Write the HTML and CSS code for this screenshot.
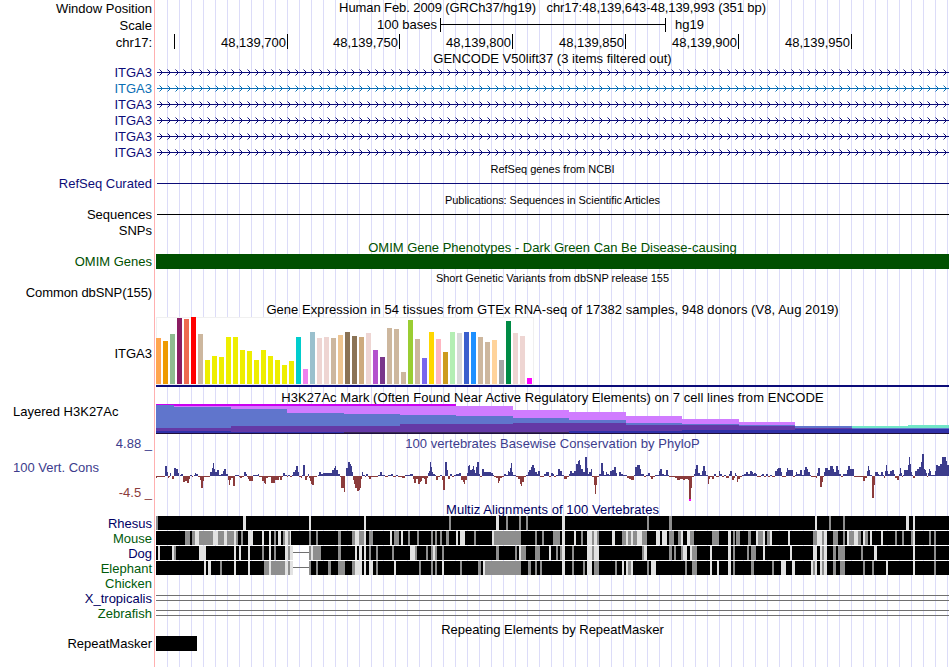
FILE: index.html
```html
<!DOCTYPE html>
<html lang="en">
<head>
<meta charset="utf-8">
<title>Genome Browser - chr17:48,139,643-48,139,993</title>
<link rel="stylesheet" href="styles.css">
</head>
<body>
<main class="browser">
  <div class="row h16 position"><div class="label">Window Position</div><div class="title">Human Feb. 2009 (GRCh37/hg19) &nbsp; chr17:48,139,643-48,139,993 (351 bp)</div></div>
  <div class="row h17"><div class="label">Scale</div><div class="scale"><span class="scale-text">100 bases</span><span class="scale-bar"></span><span>hg19</span></div></div>
  <div class="row h17"><div class="label">chr17:</div><div class="ruler"><span class="tick first"></span><span class="tick">48,139,700</span><span class="tick narrow">48,139,750</span><span class="tick">48,139,800</span><span class="tick">48,139,850</span><span class="tick">48,139,900</span><span class="tick">48,139,950</span></div></div>

  <div class="row h14 gencode"><div class="title">GENCODE V50lift37 (3 items filtered out)</div></div>
  <div class="row h16 navy"><div class="label">ITGA3</div><svg class="gene" width="793" height="16"></svg></div>
  <div class="row h16 azure"><div class="label">ITGA3</div><svg class="gene" width="793" height="16"></svg></div>
  <div class="row h16 navy"><div class="label">ITGA3</div><svg class="gene" width="793" height="16"></svg></div>
  <div class="row h16 navy"><div class="label">ITGA3</div><svg class="gene" width="793" height="16"></svg></div>
  <div class="row h16 navy"><div class="label">ITGA3</div><svg class="gene" width="793" height="16"></svg></div>
  <div class="row h16 navy"><div class="label">ITGA3</div><svg class="gene" width="793" height="16"></svg></div>

  <div class="row h15"><div class="title small">RefSeq genes from NCBI</div></div>
  <div class="row h16 navy"><div class="label">RefSeq Curated</div><div class="line"></div></div>
  <div class="row h15"><div class="title small tight">Publications: Sequences in Scientific Articles</div></div>
  <div class="row h16"><div class="label">Sequences</div><div class="line"></div></div>
  <div class="row h16"><div class="label">SNPs</div></div>
  <div class="row h16 green"><div class="title">OMIM Gene Phenotypes - Dark Green Can Be Disease-causing</div></div>
  <div class="row h15 green"><div class="label">OMIM Genes</div><div class="block"></div></div>
  <div class="row h16"><div class="title small">Short Genetic Variants from dbSNP release 155</div></div>
  <div class="row h15"><div class="label snp">Common dbSNP(155)</div></div>

  <div class="row h17 wide"><div class="title">Gene Expression in 54 tissues from GTEx RNA-seq of 17382 samples, 948 donors (V8, Aug 2019)</div></div>
  <div class="row h71"><div class="label">ITGA3</div><svg id="gtex" width="793" height="71"></svg></div>

  <div class="row h16 wide"><div class="title">H3K27Ac Mark (Often Found Near Active Regulatory Elements) on 7 cell lines from ENCODE</div></div>
  <div class="row h30"><div class="label left">Layered H3K27Ac</div><svg id="h3k" width="793" height="30"></svg></div>

  <div class="row h18 slate wide"><div class="label">4.88 _</div><div class="title">100 vertebrates Basewise Conservation by PhyloP</div></div>
  <div class="row h50 slate"><div class="label stack"><span class="left">100 Vert. Cons</span><span class="low">-4.5 _</span></div><svg id="phylop" width="793" height="50"></svg></div>

  <div class="row h14 species multiz wide"><div class="title">Multiz Alignments of 100 Vertebrates</div></div>
  <div class="row h15 species"><div class="label">Rhesus</div><svg class="align" data-species="rhesus" width="793" height="15"></svg></div>
  <div class="row h15 forest"><div class="label">Mouse</div><svg class="align" data-species="mouse" width="793" height="15"></svg></div>
  <div class="row h15 species"><div class="label">Dog</div><svg class="align" data-species="dog" width="793" height="15"></svg></div>
  <div class="row h15 forest"><div class="label">Elephant</div><svg class="align" data-species="elephant" width="793" height="15"></svg></div>
  <div class="row h15 forest"><div class="label">Chicken</div></div>
  <div class="row h15 species"><div class="label">X_tropicalis</div><div class="double"></div></div>
  <div class="row h15 forest"><div class="label">Zebrafish</div><div class="double"></div></div>

  <div class="row h15 repeats"><div class="title">Repeating Elements by RepeatMasker</div></div>
  <div class="row h15"><div class="label">RepeatMasker</div><div class="block repeat"></div></div>
</main>
<script src="script.js"></script>
</body>
</html>
```
FILE: styles.css
```css
body {
  margin: 0;
  background: #fff;
  color: #000;
  font: 13px/15px "Liberation Sans", Arial, sans-serif;
}

.browser {
  width: 949px;
  height: 667px;
  overflow: hidden;
  background:
    linear-gradient(#ffb0b0, #ffb0b0) 154px 0 / 1px 100% no-repeat,
    repeating-linear-gradient(to right, transparent 0 11px, #dcdcf8 11px 12px) 156px 0 / 793px 100% no-repeat;
}

.row {
  display: grid;
  grid-template-columns: 156px 793px;
  grid-template-rows: 100%;
  align-items: start;
  white-space: nowrap;
}
.h14 { height: 14px; }
.h15 { height: 15px; }
.h16 { height: 16px; }
.h17 { height: 17px; }
.h18 { height: 18px; }
.h30 { height: 30px; }
.h50 { height: 50px; }
.h71 { height: 71px; }

.row > svg { display: block; grid-column: 2; }
.label { text-align: right; padding-right: 4px; }
.h16 .label { padding-top: 1px; }
.h17 .label, .h18 .label { padding-top: 2px; }
.h71 .label { padding-top: 29px; }
.left { text-align: left; padding-left: 13px; }
.snp { letter-spacing: -0.1px; }

.title { grid-column: 2; text-align: center; padding-top: 2px; }
.small { font-size: 11px; line-height: 12px; padding-top: 3px; }
.tight { letter-spacing: -0.06px; }
.wide .title { letter-spacing: 0.055px; }
.position .title { padding-top: 0; letter-spacing: -0.09px; }
.multiz .title { padding-top: 0; }
.gencode .title, .repeats .title { padding-top: 1px; }

.navy { color: #0c0c78; }
.azure { color: #0a6eb4; }
.green { color: #005000; }
.slate { color: #3c3c8c; }
.species { color: #000064; }
.forest { color: #005a0a; }

.scale { display: flex; align-items: flex-start; padding-top: 1px; }
.scale-text { width: 281px; text-align: right; margin-right: 3px; }
.scale-bar {
  width: 224px;
  height: 14px;
  margin: 1px 9px 0 0;
  border: solid #000;
  border-width: 0 1px;
  background: linear-gradient(#000, #000) 0 6px / 100% 1px no-repeat;
}

.ruler { display: flex; margin-top: 1px; }
.tick {
  box-sizing: border-box;
  width: 113px;
  height: 15px;
  padding: 1px 1px 0 0;
  text-align: right;
  border-right: 1px solid #000;
}
.tick.first { width: 19px; }
.tick.narrow { width: 112px; }

.line { height: 1px; margin: 8px 0 0 1px; background: currentColor; }
.block { height: 15px; background: currentColor; }
.repeat { width: 41px; }
.double { height: 4px; margin-top: 4px; border: solid #707070; border-width: 1px 0; }

.stack { display: flex; flex-direction: column; }
.stack .left { padding-top: 8px; }
.stack .low { padding-top: 10px; color: #8c3c3c; }
```
FILE: script.js
```javascript
const NS = "http://www.w3.org/2000/svg";
const ORIGIN = 156;

function rect(svg, x, y, w, h, fill) {
  const r = document.createElementNS(NS, "rect");
  r.setAttribute("x", x);
  r.setAttribute("y", y);
  r.setAttribute("width", w);
  r.setAttribute("height", h);
  r.setAttribute("fill", fill);
  svg.appendChild(r);
}

// Introns: a thin line with strand chevrons every 8px.
document.querySelectorAll(".gene").forEach(svg => {
  rect(svg, 1, 8, 792, 1, "currentColor");
  let d = "";
  for (let x = 3.5; x < 791; x += 8) d += `M${x} 5.5l3 3l-3 3`;
  const p = document.createElementNS(NS, "path");
  p.setAttribute("d", d);
  p.setAttribute("fill", "none");
  p.setAttribute("stroke", "currentColor");
  p.setAttribute("stroke-width", "1");
  svg.appendChild(p);
});

// GTEx: top of each bar and tissue colour.
const tan = "#cdb79e", yellow = "#eeee00", pink = "#eed5d2";
const tops = [38,41,34,18,19,17,34,60,56,57,37,37,50,51,60,50,56,60,65,61,37,69,32,38,37,38,35,32,36,37,33,50,57,28,29,72,20,39,58,32,39,52,32,33,32,32,37,42,40,60,21,33,36,78];
const tissue = ["#ffa54f","#ee9a00","#8fbc8f","#8b1c62","#ee6a50","#ff0000",tan,
  ...Array(13).fill(yellow),"#00cdcd","#ee82ee","#9ac0cd",pink,pink,tan,"#eec591","#8b7355","#8b7355","#cdaa7d",pink,
  "#b452cd","#7a378b",tan,tan,tan,"#9acd32",tan,"#7a67ee","#ffd700","#ffb6c1","#cd9b1d","#b4eeb4","#d9d9d9",
  "#3a5fcd","#1e90ff",tan,tan,"#ffd39b","#a6a6a6","#008b45",pink,pink,"#ff00ff"];
const gtex = document.getElementById("gtex");
rect(gtex, 0, 0, 378, 68, "#f0f0f0");
rect(gtex, 1, 1, 376, 66, "#ffffff");
tops.forEach((t, i) => rect(gtex, i * 7, t - 17, 5, 84 - t, tissue[i]));
rect(gtex, 0, 68, 793, 2, "#0c0c78");

// H3K27Ac: stacked translucent cell lines, [start, top] steps per layer.
const h3k = document.getElementById("h3k");
const layers = [
  ["#d07cff", [[156,0],[456,2],[513,6],[569,8],[626,12],[682,15],[739,18],[795,30]]],
  ["#cc00f0", [[156,0],[456,30]], 2],
  ["#72e6c8", [[852,22],[908,21]]],
  ["#6075cc", [[156,1],[174,3],[231,5],[287,9],[344,10],[400,11],[456,12],[513,14],[569,16],[626,19],[682,20],[739,21],[795,22],[852,24]]],
  ["#6439a6", [[156,24],[231,22],[400,20],[513,19],[569,19],[626,21],[682,21],[739,22],[795,24],[852,25]]],
  ["#3030a8", [[156,27],[231,28],[344,29],[569,27],[682,26],[795,25]]],
  ["#382858", [[344,28],[569,29]]],
  ["#20103c", [[156,29]]]
];
layers.forEach(([fill, steps, depth]) => steps.forEach(([x, y], i) => {
  const end = i + 1 < steps.length ? steps[i + 1][0] : 949;
  rect(h3k, x - ORIGIN, y, end - x, Math.min(depth || 30, 30 - y), fill);
}));

// PhyloP: "start:score" runs, each holding until the next one.
const scores = `156:-2 157:-1 165:10 167:4 168:-2 169:-1 170:3 171:0 172:-3 174:8 176:7 178:3 179:0 180:1 181:2 183:-6 185:-5 187:-7 189:-3 190:1 192:-1 193:0 194:1 195:3 196:2 198:-1 200:-4 201:-12 203:-5 204:-1 210:4 212:8 213:13 214:7 215:4 217:6 219:1 221:2 223:5 224:7 226:2 228:-4 229:-9 230:-4 231:-2 233:-10 235:1 239:-1 240:-2 242:-1 244:4 246:2 247:-1 248:-3 249:-5 253:1 258:2 259:-1 262:-5 264:-7 265:-8 266:-2 268:-1 271:-7 275:-4 279:-1 280:-4 282:-1 283:3 285:1 287:-1 288:1 290:-1 292:1 293:4 295:6 296:10 298:4 299:-1 301:-2 302:1 303:11 305:-4 307:-1 308:2 309:-2 310:-5 311:-8 312:-9 314:-1 317:0 318:1 319:4 321:2 323:3 332:6 334:8 335:10 336:6 338:2 340:-1 341:-12 344:-16 345:0 346:8 348:14
350:12 351:10 352:4 353:-4 354:-8 355:-12 357:-15 359:-14 360:-12 361:-3 362:4 363:1 365:-1 366:2 368:-1 369:-3 371:-1 378:1 380:4 382:1 385:-1 388:1 391:2 393:-1 396:1 398:-1 402:-2 405:1 410:2 413:-3 414:-7 416:-3 418:-8 420:-6 421:-5 422:-2 424:-3 425:-8 427:-2 428:3 429:5 430:14 431:9 432:4 433:2 435:1 436:-4 438:-1 440:1 442:-4 443:-14 445:14 447:6 448:-3 450:2 452:-1 454:1 456:2 459:3 461:-4 463:-6 464:-8 465:-4 467:3 468:10 469:11 470:6 472:7 473:10 474:6 475:3 476:9 477:14 479:2 480:-1 482:7 484:4 491:3 493:1 494:-1 496:-2 498:-7 499:-5 500:-2 502:-1 504:2 506:1 508:5 509:4 510:8 511:13 512:4 513:1 516:-1 518:-3 520:-8 521:-10 522:-6 524:-1 526:1 528:4 529:6 531:9 532:11 534:8 535:4 537:2 538:5 540:-1 544:2 546:4 549:-1
551:3 553:2 554:-1 556:1 558:7 560:5 562:1 564:-3 567:-1 569:2 570:5 572:3 574:5 576:12 578:15 579:16 580:11 581:7 583:4 585:19 587:8 588:2 589:4 591:7 592:-1 594:-9 595:-18 596:-9 597:-1 599:2 601:13 603:5 604:1 606:4 607:2 609:1 610:5 612:6 614:9 616:3 617:0 619:4 621:2 623:1 627:-2 629:-3 631:-4 634:1 635:9 637:11 640:7 641:2 644:-1 646:1 648:3 650:-1 651:-3 653:-1 655:1 659:5 660:7 662:2 664:1 666:6 668:1 669:-1 675:-2 677:-4 680:-3 683:-4 685:-3 688:-4 689:-25 691:-12 692:-1 694:2 695:7 696:11 698:3 700:1 702:5 703:10 705:5 706:1 708:-8 709:-3 710:-1 712:-3 714:2 716:-1 719:5 720:2 722:-1 724:1 726:-2 729:2 730:5 732:-4 734:-2 735:3 736:1 737:-6 738:-3 740:-1 742:1 744:2 746:4 748:2
750:5 752:4 753:2 754:3 756:2 757:-1 761:1 762:2 764:-1 766:2 768:-1 770:1 772:-1 775:5 777:7 778:8 781:4 782:-1 786:4 787:8 788:6 793:-1 795:1 796:4 797:2 800:6 802:1 804:6 805:9 807:7 808:4 810:1 811:-1 816:-2 817:3 818:8 820:-11 822:-6 823:-1 824:4 825:8 828:6 830:10 833:7 834:4 836:10 838:6 839:2 841:-1 843:2 847:6 848:10 850:7 854:-1 863:-5 865:-2 867:5 868:10 869:6 870:1 872:-22 874:-9 875:4 878:2 879:1 881:4 883:1 884:-2 885:5 886:11 887:5 888:2 890:5 892:6 894:2 895:-2 897:-4 899:2 900:8 901:3 902:-1 903:1 904:6 908:11 909:19 910:12 911:4 912:1 913:-2 915:5 917:7 919:9 921:14 922:22 924:7 925:6 926:3 927:-1 928:3 929:7 930:5 931:1 935:5 936:11 938:10 940:12 942:19 946:15 947:11 949:0`
  .split(/\s+/).map(s => s.split(":").map(Number));
const phylop = document.getElementById("phylop");
scores.slice(0, -1).forEach(([x, v], i) => {
  const w = scores[i + 1][0] - x;
  rect(phylop, x - ORIGIN, v > 0 ? 24 - v : 24, w, Math.abs(v), v > 0 ? "#3c3c8c" : "#8c3c3c");
});
rect(phylop, 689 - ORIGIN, 47, 2, 2, "#ff00ff");

// Alignments: kind, start, width. g = partial, l = weak, n = unaligned gap.
const align = {
  rhesus: "g156,2 l243,3 l309,2 l364,2 g449,2 l496,3 g506,2 g519,2 g526,2 l562,3 g647,2 g669,3 l815,2 g829,2 g843,2 l906,3 l913,2",
  mouse: "g185,5 g192,3 l195,4 g199,14 l213,5 g218,6 l224,3 g227,7 l234,2 g236,2 g241,2 l248,5 l262,2 l269,2 g274,2 l278,3 g283,2 l285,3 g288,2 l290,1 g309,2 g316,2 g338,3 g352,3 l355,4 g359,5 l364,2 g369,4 l390,2 g394,5 l401,2 g408,2 g417,2 g431,2 g435,2 g440,2 g446,3 l456,2 l460,5 g474,2 l492,2 g494,27 g535,2 g542,2 g553,7 l562,3 l574,2 g581,2 l587,5 g592,2 l594,3 g597,2 l612,3 g622,4 l626,2 g628,3 l631,2 g633,4 l637,5 g642,5 l656,4 l662,5 g669,5 g678,3 l681,2 l687,3 g690,4 g712,7 l728,3 g733,2 g736,4 g748,3 l756,2 g758,5 l763,2 g767,3 l770,2 l788,2 g813,4 l817,5 g822,2 l824,3 g833,5 g843,2 l847,2 g849,5 l854,4 g858,3 l863,2 g865,3 l870,2 l881,2 g895,2 g902,2 g911,2 l913,2 g929,2 g934,2",
  dog: "l158,2 l172,2 g174,2 l199,7 l234,2 l239,2 l248,2 g262,2 l269,2 g274,2 l285,3 g288,2 l290,3 n293,16 g309,2 l311,2 g313,8 g338,3 l355,2 l359,3 l364,2 g369,2 g376,2 g392,2 l410,5 g415,2 g426,2 g431,2 l433,2 g435,2 g442,2 g496,3 g515,2 l519,2 g521,5 g535,5 l549,2 g556,2 g560,2 l562,3 g572,2 l587,5 g592,2 l594,5 g642,2 l644,3 g669,3 g674,2 g681,2 l683,4 l690,2 g692,5 l710,2 l728,3 g733,2 g747,2 g751,5 l763,2 l790,2 l813,4 l820,2 g822,2 l824,3 g833,3 g838,7 g861,2 l874,3 l913,2 g934,2",
  elephant: "l204,2 l208,3 g220,2 l234,2 l248,2 g264,5 l269,2 g271,14 l285,3 g288,2 l290,3 n293,16 g309,2 g316,2 g328,3 g338,7 g352,3 l355,7 l364,2 l369,4 g376,2 l394,2 g419,2 g431,2 g435,2 l442,2 g460,2 g478,3 l483,2 g485,36 g528,3 g535,2 g540,2 l562,3 g572,2 g583,2 l587,5 g594,5 g615,2 l622,2 l626,2 g628,3 l631,2 g647,2 l651,5 g685,2 g692,5 l710,2 l717,2 l728,3 g733,2 g751,3 g772,2 l781,5 l792,3 l811,2 g813,2 l815,2 l820,2 g822,2 l824,3 g833,3 g840,5 g863,2 g872,2 l886,2 l913,2 g934,2"
};
const shade = { g: "#8e8e8e", l: "#e2e2e2" };
document.querySelectorAll(".align").forEach(svg => {
  let x = ORIGIN;
  align[svg.dataset.species].split(" ").forEach(item => {
    const [start, width] = item.slice(1).split(",").map(Number);
    if (start > x) rect(svg, x - ORIGIN, 0, start - x, 14, "#000");
    if (item[0] === "n") rect(svg, start - ORIGIN, 6, width, 1, "#707070");
    else rect(svg, start - ORIGIN, 0, width, 14, shade[item[0]]);
    x = start + width;
  });
  rect(svg, x - ORIGIN, 0, 949 - x, 14, "#000");
});
```
